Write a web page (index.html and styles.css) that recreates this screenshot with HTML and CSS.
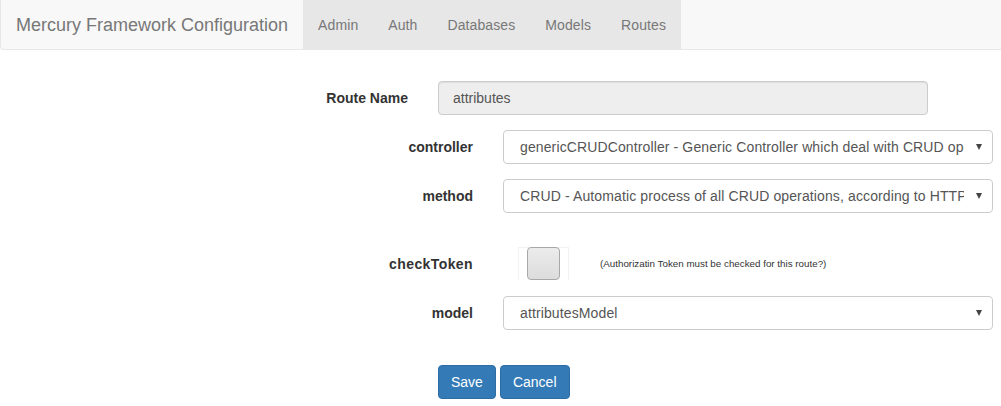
FILE: index.html
```html
<!DOCTYPE html>
<html>
<head>
<meta charset="utf-8">
<link rel="stylesheet" href="styles.css">
</head>
<body>
<nav class="navbar">
  <a class="brand">Mercury Framework Configuration</a>
  <ul class="nav">
    <li>Admin</li>
    <li>Auth</li>
    <li>Databases</li>
    <li>Models</li>
    <li>Routes</li>
  </ul>
</nav>
<form class="form">
  <div class="row row-name">
    <label class="lbl lbl-name">Route Name</label>
    <div class="input disabled">attributes</div>
  </div>
  <div class="row row-first">
    <label class="lbl">controller</label>
    <div class="input select"><span class="val">genericCRUDController - Generic Controller which deal with CRUD operations</span><span class="caret"></span></div>
  </div>
  <div class="row">
    <label class="lbl">method</label>
    <div class="input select"><span class="val">CRUD - Automatic process of all CRUD operations, according to HTTP method</span><span class="caret"></span></div>
  </div>
  <div class="row row-check">
    <label class="lbl lbl-check">checkToken</label>
    <div class="check-wrap"><span class="check"></span></div>
    <span class="help">(Authorizatin Token must be checked for this route?)</span>
  </div>
  <div class="row row-model">
    <label class="lbl">model</label>
    <div class="input select"><span class="val">attributesModel</span><span class="caret"></span></div>
  </div>
  <div class="buttons">
    <button type="button" class="btn">Save</button>
    <button type="button" class="btn">Cancel</button>
  </div>
</form>
</body>
</html>
```
FILE: styles.css
```css
html, body {
  margin: 0;
  padding: 0;
  overflow: hidden;
}
body {
  font-family: "Liberation Sans", Arial, sans-serif;
  font-size: 14px;
  line-height: 20px;
  color: #333;
  background: #fff;
}
.navbar {
  display: flex;
  height: 50px;
  box-sizing: border-box;
  background: #f8f8f8;
  border: 1px solid #e7e7e7;
  border-top: none;
  border-right: none;
  border-radius: 0 0 0 4px;
}
.brand {
  padding: 15px 15px 14px;
  font-size: 18px;
  line-height: 20px;
  color: #777;
}
.nav {
  display: flex;
  margin: 0;
  padding: 0;
  list-style: none;
  background: #e7e7e7;
}
.nav li {
  padding: 15px 15px 14px;
  color: #777;
  line-height: 20px;
  letter-spacing: 0.1px;
}
.form {
  margin: 31px 0 0;
}
.row {
  display: flex;
  align-items: center;
  margin-top: 15px;
}
.row-name {
  margin-top: 0;
}
.lbl {
  width: 473px;
  flex: none;
  text-align: right;
  font-weight: bold;
  margin-right: 30px;
}
.lbl-name {
  width: 408px;
}
.lbl-check {
  letter-spacing: 0.4px;
}
.input {
  width: 490px;
  height: 34px;
  box-sizing: border-box;
  border: 1px solid #ccc;
  border-radius: 4px;
  color: #555;
  background: #fff;
  display: flex;
  align-items: center;
  padding: 0 12px 0 16px;
  box-shadow: inset 0 1px 1px rgba(0,0,0,.075);
}
.disabled {
  background: #eee;
  padding-left: 14px;
}
.select {
  box-shadow: none;
  letter-spacing: 0.12px;
}
.val {
  flex: 1;
  overflow: hidden;
  white-space: nowrap;
  margin-right: 12px;
}
.caret {
  width: 0;
  height: 0;
  border-left: 3.5px solid transparent;
  border-right: 3.5px solid transparent;
  border-top: 6px solid #444;
  margin-right: -2px;
}
.row-check {
  margin-top: 34px;
}
.check-wrap {
  margin-left: 15px;
  width: 51px;
  height: 33px;
  box-sizing: border-box;
  border: 1px solid #f2f2f2;
  border-bottom: none;
  padding-left: 8px;
}
.check {
  display: block;
  width: 33px;
  height: 33px;
  margin-top: -1px;
  box-sizing: border-box;
  border: 1px solid #a8a8a8;
  border-radius: 4px;
  background: linear-gradient(#ececec, #dcdcdc);
}
.help {
  margin-left: 31px;
  font-size: 9.8px;
  color: #333;
}
.row-model {
  margin-top: 16px;
}
.buttons {
  margin-top: 35px;
  padding-left: 438px;
  display: flex;
  gap: 4px;
}
.btn {
  font-family: "Liberation Sans", Arial, sans-serif;
  font-size: 14px;
  line-height: 20px;
  padding: 6px 12px;
  color: #fff;
  background: #337ab7;
  border: 1px solid #2e6da4;
  border-radius: 4px;
}
```
